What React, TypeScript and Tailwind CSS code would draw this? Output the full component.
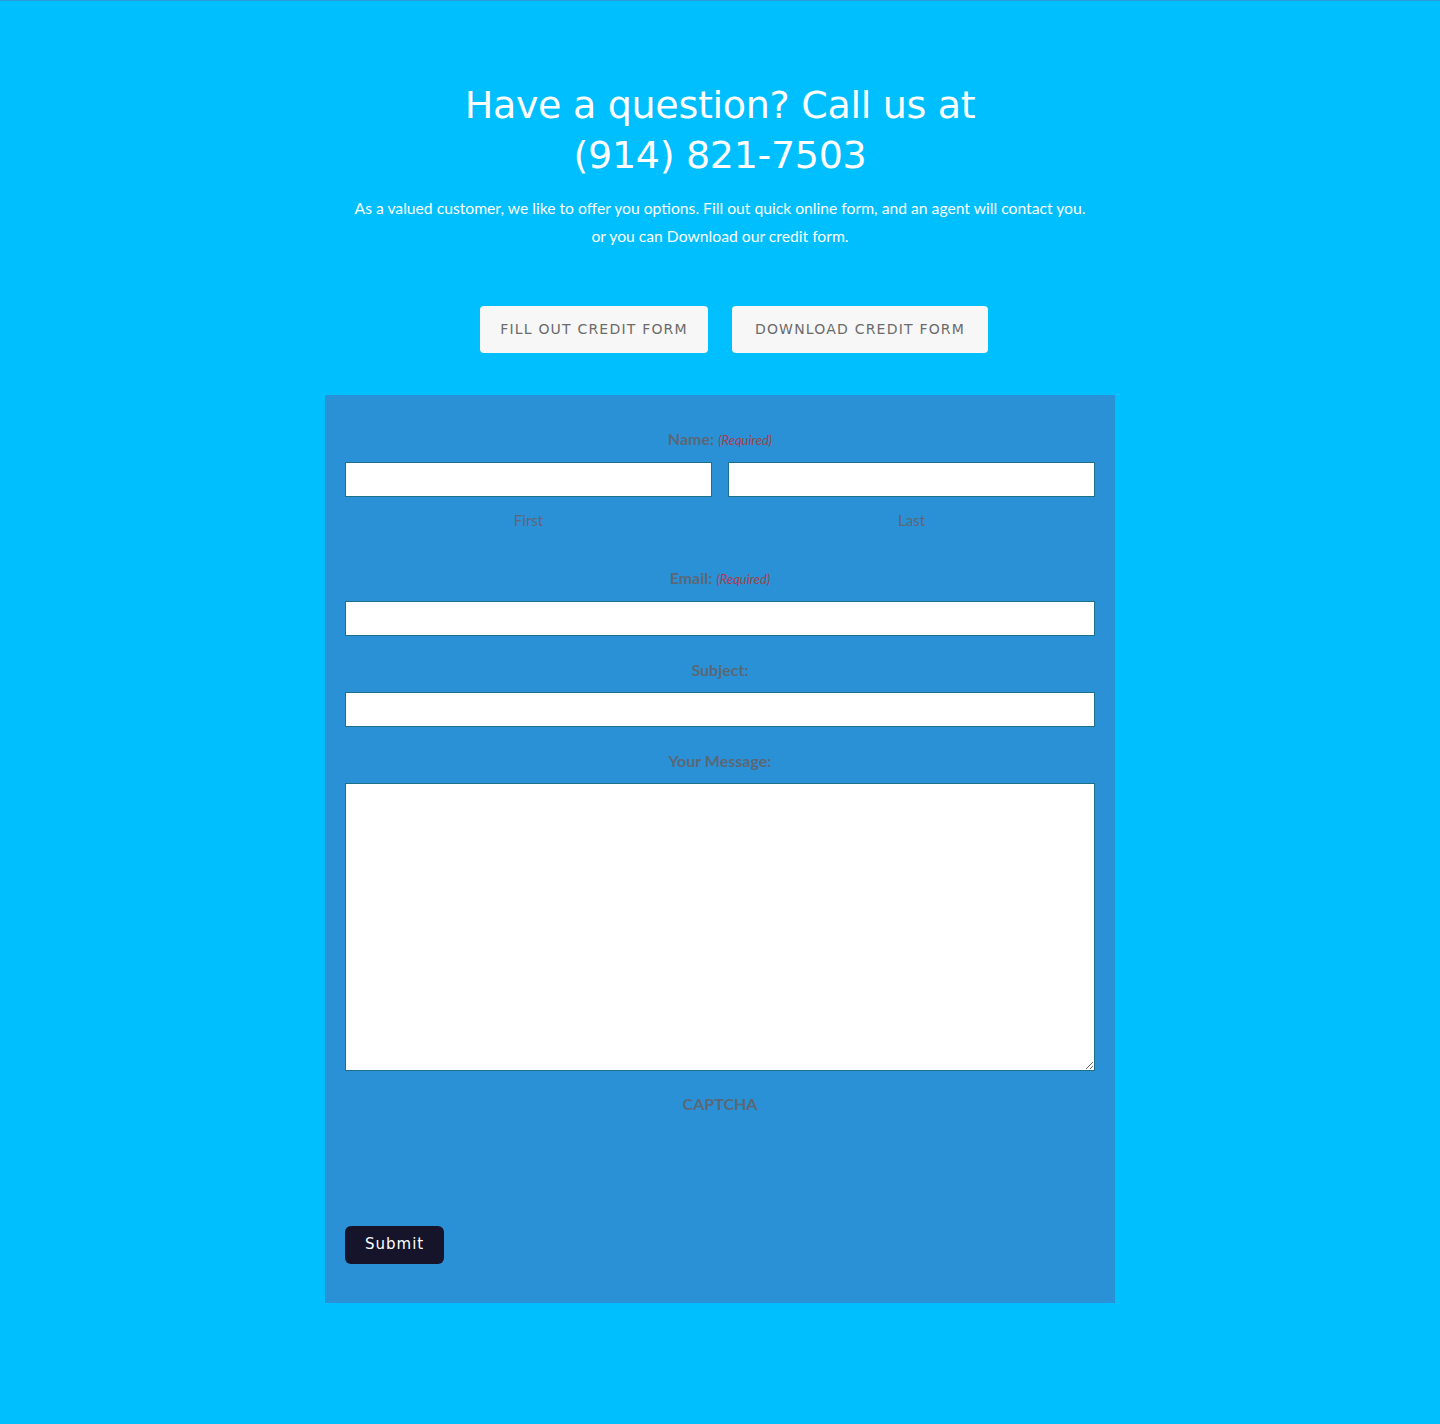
import React from 'react'

const label = "text-[16px] leading-[22px] font-bold text-[#5a6876] text-center"
const req = "text-[13px] italic font-normal text-[#a5404c] ml-1"
const input = "block w-full h-[35px] bg-white border border-[#1d7089] outline-none"
const pill = "h-[47px] px-5 rounded bg-[#f7f7f7] text-[#6b6b6b] text-[14px] tracking-[1.2px] font-['DejaVu_Sans',sans-serif]"

export default function App() {
  return (
    <div className="min-h-[1424px] bg-[#00bfff] border-t border-[#2a9ad6] flex flex-col items-center font-['Lato',sans-serif]">
      <h1 className="mt-[79px] text-center text-white text-[38px] leading-[50px] font-['DejaVu_Sans',sans-serif] font-normal tracking-[-0.3px]">
        Have a question? Call us at
        <br />
        (914) 821-7503
      </h1>
      <p className="mt-[14px] text-center text-white text-[15.7px] leading-[28px]">
        As a valued customer, we like to offer you options. Fill out quick online form, and an agent will contact you.
        <br />
        or you can Download our credit form.
      </p>
      <div className="mt-[56px] pl-[28px] flex gap-6">
        <button className={pill + " w-[228px]"}>FILL OUT CREDIT FORM</button>
        <button className={pill + " w-[256px]"}>DOWNLOAD CREDIT FORM</button>
      </div>
      <form className="mt-[42px] w-[790px] bg-[#2a91d6] px-5 pt-[33px] pb-[39px]">
        <div className={label}>
          Name:<span className={req}>(Required)</span>
        </div>
        <div className="mt-[11px] grid grid-cols-2 gap-4">
          <div>
            <input className={input} />
            <div className="mt-[12px] text-center text-[15px] text-[#5a6876]">First</div>
          </div>
          <div>
            <input className={input} />
            <div className="mt-[12px] text-center text-[15px] text-[#5a6876]">Last</div>
          </div>
        </div>
        <div className={label + " mt-[35px]"}>
          Email:<span className={req}>(Required)</span>
        </div>
        <input className={input + " mt-[11px]"} />
        <div className={label + " mt-[23px]"}>Subject:</div>
        <input className={input + " mt-[11px]"} />
        <div className={label + " mt-[23px]"}>Your Message:</div>
        <textarea className="block w-full h-[288px] mt-[11px] bg-white border border-[#1d7089] outline-none" />
        <div className={label + " mt-[22px]"}>CAPTCHA</div>
        <button
          type="button"
          className="mt-[111px] h-[38px] px-5 rounded-md bg-[#15142a] text-white text-[15px] tracking-[1px] font-['DejaVu_Sans',sans-serif]"
        >
          Submit
        </button>
      </form>
    </div>
  )
}
